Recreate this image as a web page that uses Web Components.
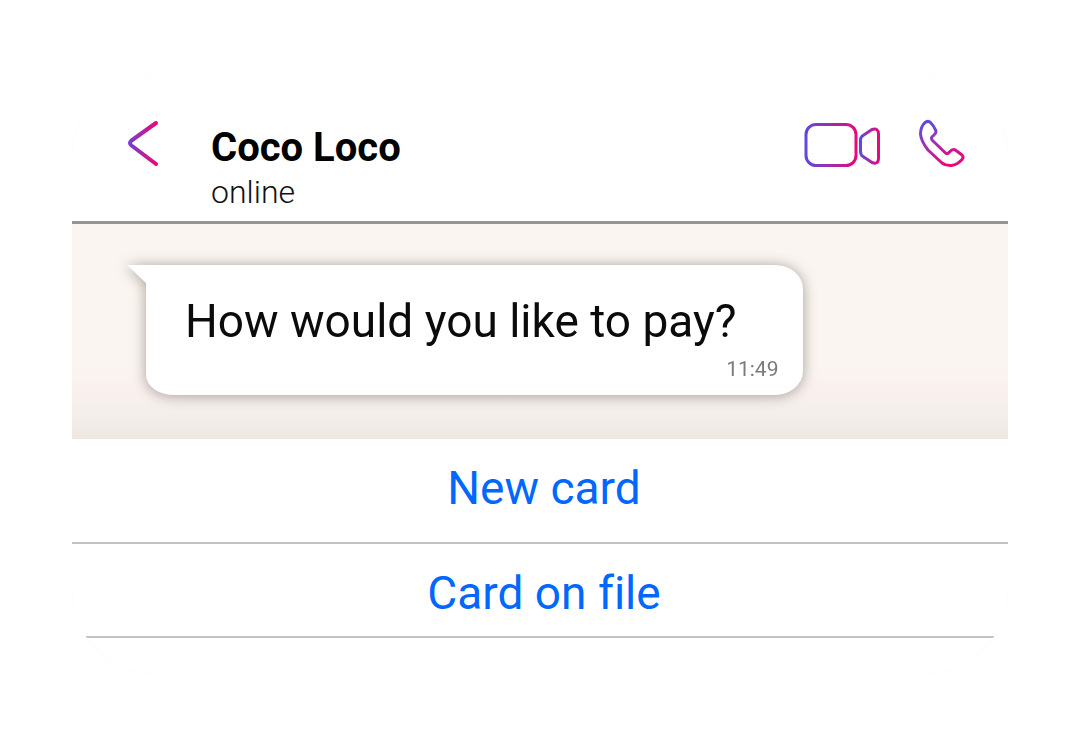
<!DOCTYPE html>
<html lang="en">
<head>
<meta charset="utf-8">
<meta name="viewport" content="width=device-width, initial-scale=1">
<title>Coco Loco</title>
<style>
  body {
    margin: 0;
    background: #fff;
    font-family: Roboto, "Liberation Sans", sans-serif;
    font-variant-ligatures: none;
  }
</style>
</head>
<body>
<chat-card>
  <chat-header slot="header" name="Coco Loco" status="online"></chat-header>
  <chat-thread>
    <chat-bubble time="11:49">How would you like to pay?</chat-bubble>
  </chat-thread>
  <reply-option>New card</reply-option>
  <reply-option class="last">Card on file</reply-option>
</chat-card>

<script>
/**
 * Rounded frame around the whole conversation
 */
class ChatCard extends HTMLElement {
  constructor() {
    super();
    this.attachShadow({ mode: 'open' });
    this.shadowRoot.innerHTML = `
      <style>
        :host {
          display: block;
          padding: 73px 72px;
        }

        .card {
          box-sizing: border-box;
          padding-bottom: 36px;
          border-radius: 84px;
          overflow: hidden;
          background: #fff;
          box-shadow: 0 0 1px rgba(0, 0, 0, 0.06);
        }
      </style>
      <main class="card">
        <slot name="header"></slot>
        <slot></slot>
      </main>
    `;
  }
}

/**
 * Top bar: back button, contact, call buttons
 */
class ChatHeader extends HTMLElement {
  constructor() {
    super();
    this.attachShadow({ mode: 'open' });
  }

  connectedCallback() {
    this.render();
  }

  render() {
    this.shadowRoot.innerHTML = `
      <style>
        :host {
          display: block;
        }

        header {
          display: flex;
          align-items: flex-start;
          padding: 46px 42px 10px 54px;
          border-bottom: 3px solid #969595;
        }

        button {
          padding: 0;
          border: 0;
          background: none;
          cursor: pointer;
        }

        svg {
          display: block;
          fill: none;
          stroke-width: 3;
          stroke-linecap: round;
          stroke-linejoin: round;
        }

        .contact {
          flex: 1;
          padding: 5px 0 0 51px;
        }

        h1,
        p {
          margin: 0;
        }

        h1 {
          font-size: 40px;
          line-height: 48px;
          font-weight: 700;
          color: #000;
        }

        p {
          margin-top: 1px;
          font-size: 32px;
          line-height: 38px;
          font-weight: 300;
          color: #111;
        }

        .actions {
          display: flex;
          gap: 35px;
        }
      </style>
      <header>
        <button type="button" aria-label="Back">
          <svg width="34" height="50" viewBox="0 0 34 50">
            <defs>
              <linearGradient id="g" gradientUnits="userSpaceOnUse" x1="2" y1="0" x2="31" y2="0">
                <stop offset="0" stop-color="#6e42d3"/>
                <stop offset="1" stop-color="#ec0677"/>
              </linearGradient>
            </defs>
            <path stroke="url(#g)" stroke-width="4" d="M30 4 5.500 21.500Q2.500 24 5.500 26.500L30 45"/>
          </svg>
        </button>
        <div class="contact">
          <h1>${this.getAttribute('name')}</h1>
          <p>${this.getAttribute('status')}</p>
        </div>
        <div class="actions">
          <button type="button" aria-label="Video call">
            <svg width="78" height="50" viewBox="0 0 78 50">
              <defs>
                <linearGradient id="body" gradientUnits="userSpaceOnUse" x1="2" y1="0" x2="54" y2="0">
                  <stop offset="0" stop-color="#5a4be0"/>
                  <stop offset="1" stop-color="#ec0677"/>
                </linearGradient>
                <linearGradient id="lens" gradientUnits="userSpaceOnUse" x1="57" y1="0" x2="76" y2="0">
                  <stop offset="0" stop-color="#5a4be0"/>
                  <stop offset="1" stop-color="#ec0677"/>
                </linearGradient>
              </defs>
              <rect stroke="url(#body)" x="3" y="5.500" width="50" height="41" rx="10"/>
              <path stroke="url(#lens)" d="M57.500 21Q57.500 18 60 16.500L69 10.500Q75.500 8.500 75.500 15V39Q75.500 46 69 43.500L60 37.500Q57.500 36 57.500 32Z"/>
            </svg>
          </button>
          <button type="button" aria-label="Voice call">
            <svg width="50" height="50" viewBox="0 0 50 50">
              <defs>
                <linearGradient id="tel" gradientUnits="userSpaceOnUse" x1="12" y1="4" x2="30" y2="46">
                  <stop offset="0" stop-color="#5a4be0"/>
                  <stop offset="0.400" stop-color="#a030b5"/>
                  <stop offset="1" stop-color="#ec0677"/>
                </linearGradient>
              </defs>
              <path stroke="url(#tel)" d="M8.500 4Q12 1 14.500 3.500Q18 7 19.500 11Q21 14 17.500 16.500Q14 18.500 16.500 21.500L29.500 34Q31.500 35.500 33.500 33Q37 29 40 31.500L46 36Q48 38 46 40.500Q41 46 35.500 46.500Q30 47 26 44L12 31Q5 22 4.500 15Q4.500 8 8.500 4Z"/>
            </svg>
          </button>
        </div>
      </header>
    `;
  }
}

/**
 * Tinted area that holds the messages
 */
class ChatThread extends HTMLElement {
  constructor() {
    super();
    this.attachShadow({ mode: 'open' });
    this.shadowRoot.innerHTML = `
      <style>
        :host {
          display: flex;
          flex-direction: column;
          align-items: flex-start;
          padding: 41px 74px 44px;
          background: linear-gradient(#faf5f0 0%, #faf5f0 66%, #faf1ee 76%, #f4efeb 88%, #ede8e2 100%);
        }
      </style>
      <slot></slot>
    `;
  }
}

/**
 * Incoming message with a tail at its top left corner
 */
class ChatBubble extends HTMLElement {
  constructor() {
    super();
    this.attachShadow({ mode: 'open' });
  }

  connectedCallback() {
    this.shadowRoot.innerHTML = `
      <style>
        :host {
          display: block;
          box-sizing: border-box;
          position: relative;
          max-width: 100%;
          padding: 29px 25px 13px 39px;
          border-radius: 0 28px 28px 28px / 0 24px 24px 20px;
          background: #fff;
          filter: drop-shadow(0 1px 7px rgba(60, 45, 40, 0.440));
        }

        .tail {
          position: absolute;
          top: 0;
          right: 100%;
          margin-right: -1px;
          width: 20px;
          height: 19px;
          background: #fff;
          clip-path: polygon(0 0, 100% 0, 100% 100%);
        }

        p {
          margin: 0;
          padding-right: 42px;
          font-size: 46px;
          line-height: 54px;
          color: #0b0b0b;
        }

        time {
          display: block;
          margin-top: 8px;
          font-size: 21px;
          line-height: 26px;
          text-align: right;
          color: #7b7b7b;
        }
      </style>
      <span class="tail"></span>
      <p><slot></slot></p>
      <time>${this.getAttribute('time')}</time>
    `;
  }
}

/**
 * Full-width reply button
 */
class ReplyOption extends HTMLElement {
  constructor() {
    super();
    this.attachShadow({ mode: 'open' });
    this.shadowRoot.innerHTML = `
      <style>
        :host {
          display: block;
          border-bottom: 2px solid #c3c3c3;
        }

        button {
          display: block;
          width: 100%;
          padding: 22px 0 27px 8px;
          border: 0;
          background: none;
          font: inherit;
          font-variant-ligatures: none;
          font-size: 46px;
          line-height: 54px;
          color: #0068ff;
          cursor: pointer;
        }

        :host(.last) button {
          padding-bottom: 16px;
        }
      </style>
      <button type="button"><slot></slot></button>
    `;
  }
}

customElements.define('chat-card', ChatCard);
customElements.define('chat-header', ChatHeader);
customElements.define('chat-thread', ChatThread);
customElements.define('chat-bubble', ChatBubble);
customElements.define('reply-option', ReplyOption);
</script>
</body>
</html>
